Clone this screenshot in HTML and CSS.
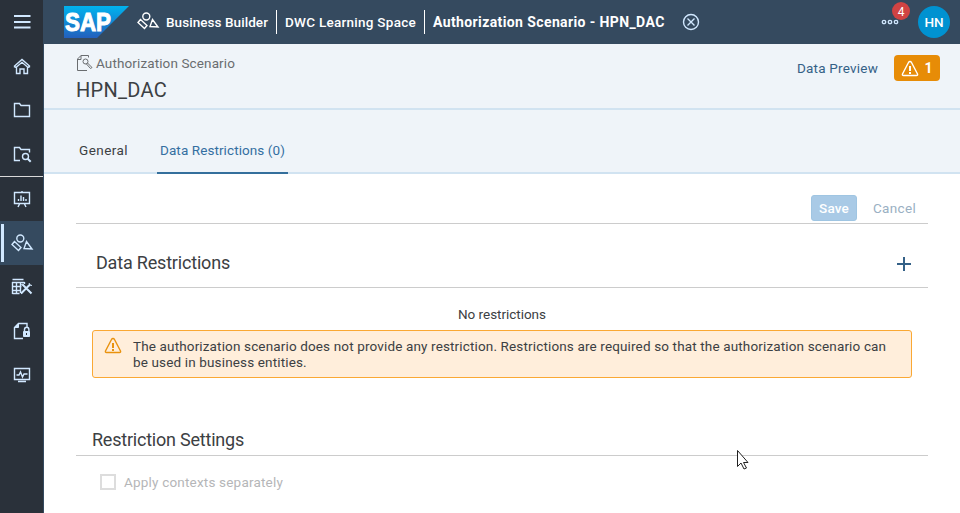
FILE: index.html
```html
<!DOCTYPE html>
<html lang="en">
<head>
<meta charset="utf-8">
<title>Business Builder</title>
<link rel="stylesheet" href="styles.css">
</head>
<body>
<div class="app">
  <nav class="rail">
    <a class="rail-item"><svg width="24" height="24"><path class="thick" d="M4 6h16.500M4 12h16.500M4 17.500h16.500"/></svg></a>
    <a class="rail-item"><svg width="24" height="24"><path class="mid" d="M4 12.500 12 5.500 20 12.500M6.500 13v6.500h3.500v-4.500h4v4.500h3.500V13L12 8.300 6.500 13M4 12.500l2.500 1M20 12.500l-2.500 1"/></svg></a>
    <a class="rail-item"><svg width="24" height="24"><path class="mid" d="M4.500 18.500V5.500h5l1.500 2h8.500v11z"/></svg></a>
    <a class="rail-item"><svg width="24" height="24"><path class="mid" d="M10 18.500H4.500V5.500h5l1.500 2h8.500v3"/><circle class="mid" cx="15.500" cy="14.500" r="3"/><path class="thick" d="m17.700 16.700 3 3"/></svg></a>
    <span class="rail-divider"></span>
    <a class="rail-item"><svg width="24" height="24"><path class="mid" d="M4.500 5.500h15v11h-15zM12 4v2M9.500 17 8 20M14.500 17l1.500 3M8.500 14v-2M11 14V8.500M13.500 14v-4M16 14v-2"/></svg></a>
    <a class="rail-item active"><svg width="24" height="24"><g class="mid"><circle cx="10.300" cy="7.500" r="3.500"/><path d="m4.500 10.500-2.500 3 6.500 6 2.500-3zM16.500 10.500l-2.500 7 8 .500z"/></g></svg></a>
    <a class="rail-item"><svg width="24" height="24"><path class="mid" d="M2.500 4.500h11M2 7.500h12.500M2.500 11.500h9M2.500 15.500h8M2.500 18.500h7M2.500 7v12M6.500 7v12M10.500 7v11M14.500 7v2"/><path class="thick" d="m12.500 9.500 9 9M20 9.500l-9 9"/><path d="m19 8 1 2 2 .500M11 10l2-1M10.500 17l1.500 2"/></svg></a>
    <a class="rail-item"><svg width="24" height="24"><path class="mid" d="M13 19.500H4.500V8.500l4-4h8.500v4M14.500 12v-1.500a2.200 2.200 0 0 1 4.400 0V12"/><path class="solid" d="M4.500 8.500 8.500 4.500v4zM13.500 12.500h6v5h-6z"/><path class="dark" d="M16.500 14v2"/></svg></a>
    <a class="rail-item"><svg width="24" height="24"><path class="mid" d="M4.500 5.500h15v11h-15zM8 18.500h8M6.500 12H9l1.500-3 2 5 1.500-3h3.500"/></svg></a>
  </nav>
  <div class="main">
    <header class="shell">
      <svg class="logo" width="65" height="32" viewBox="0 0 65 32"><defs><linearGradient id="sap" x2="0" y2="1"><stop stop-color="#00b3ee"/><stop offset="1" stop-color="#2360bd"/></linearGradient></defs><path fill="url(#sap)" stroke="none" d="M0 0h65L33 32H0z"/><text x="1" y="25" textLength="46" lengthAdjust="spacingAndGlyphs">SAP</text></svg>
      <div class="crumb crumb-app"><svg width="24" height="24"><g class="mid"><circle cx="10.300" cy="6.500" r="3.500"/><path d="m4.500 9.500-2.500 3 6.500 6 2.500-3zM16.500 9.500l-2.500 7 8 .500z"/></g></svg><span>Business Builder</span></div>
      <div class="crumb crumb-space"><span>DWC Learning Space</span></div>
      <div class="crumb crumb-page"><span>Authorization Scenario - HPN_DAC</span></div>
      <svg class="close" width="18" height="18"><circle class="mid" cx="9" cy="9" r="7.500"/><path class="mid" d="m5.500 5.500 7 7m0-7-7 7"/></svg>
      <div class="more"><svg width="18" height="6"><circle cx="3" cy="3" r="1.700"/><circle cx="9" cy="3" r="1.700"/><circle cx="15" cy="3" r="1.700"/></svg><span class="badge">4</span></div>
      <div class="avatar">HN</div>
    </header>
    <section class="object-header">
      <div class="object-title">
        <div class="object-type"><svg width="18" height="18"><path d="M11 16.500H1.500V5L5 1.500h7.500v2M1.500 5.500h3.500v-4"/><circle cx="9.500" cy="7.500" r="2.500"/><path d="m10 9.500 4.500 5 1.500-1-4.500-4.500"/></svg><span>Authorization Scenario</span></div>
        <h1>HPN_DAC</h1>
      </div>
      <a class="preview">Data Preview</a>
      <div class="warn-button"><svg width="18" height="17"><path class="mid" d="M9 1.500q-1 0-1.500 1L1.500 14q-.500 1.500 1 1.500h13q1.500 0 1-1.500L10.500 2.500q-.500-1-1.500-1z"/><path class="bang" d="M9 6v5M9 12v2"/></svg><b>1</b></div>
    </section>
    <div class="tabs">
      <a class="tab general">General</a>
      <a class="tab selected">Data Restrictions (0)</a>
    </div>
    <main class="content">
      <div class="toolbar"><button class="save">Save</button><a class="cancel">Cancel</a></div>
      <div class="list-header"><h2>Data Restrictions</h2><svg width="16" height="16"><path d="M8 1v14M1 8h14"/></svg></div>
      <p class="empty">No restrictions</p>
      <div class="message"><svg width="18" height="17"><path class="mid" d="M9 1.500q-1 0-1.500 1L1.500 14q-.500 1.500 1 1.500h13q1.500 0 1-1.500L10.500 2.500q-.500-1-1.500-1z"/><path class="bang" d="M9 6v5M9 12v2"/></svg><p>The authorization scenario does not provide any restriction. Restrictions are required so that the authorization scenario can be used in business entities.</p></div>
      <div class="settings-header"><h2>Restriction Settings</h2></div>
      <label class="option"><i class="box"></i><span>Apply contexts separately</span></label>
    </main>
  </div>
</div>
<svg class="pointer" width="14" height="22"><path d="M1.500 1.500v16l3.500-3.500 3 6 2.500-1-3-5.500h4.500z"/></svg>
</body>
</html>
```
FILE: styles.css
```css
* { box-sizing: border-box; }
body { margin: 0; background: #fff; color: #3c4043; font: 13.500px/16px Roboto, "Liberation Sans", sans-serif; overflow: hidden; }
h1, h2, p { margin: 0; font-weight: 400; }
svg { display: block; flex: none; fill: none; stroke: currentColor; }
.thick { stroke-width: 2; }
.mid { stroke-width: 1.400; }
.bang { stroke-width: 2; }
.app { display: flex; height: 513px; }
.rail { width: 44px; flex: none; background: #2a313a; border-right: 1px solid #354a5f; color: #d1e8ff; }
.rail-item { display: flex; height: 44px; align-items: center; justify-content: center; padding-left: 1px; }
.rail-item.active { background: linear-gradient(#d1e8ff, #d1e8ff) 1px 3px / 3px 38px no-repeat #354a5f; }
.rail-divider { display: block; height: 1px; background: #d9d9d9; }
.solid { fill: currentColor; }
.dark { stroke: #2a313a; }
.main { flex: 1; min-width: 0; }
.shell { display: flex; align-items: center; height: 44px; padding: 0 10px 0 20px; background: #354a5f; color: #fff; }
.logo text { fill: #fff; stroke: #fff; stroke-width: 1; font: 700 26px "Liberation Sans", sans-serif; }
.crumb { display: flex; align-items: center; height: 24px; font-weight: 500; white-space: nowrap; }
.crumb-app { padding: 0 8px 0 7px; gap: 6px; letter-spacing: .066px; }
.crumb-space { padding: 0 8px; border-left: 1px solid #fff; letter-spacing: .264px; }
.crumb-page { padding: 0 17px 0 8px; border-left: 1px solid #fff; font-size: 14px; font-weight: 700; letter-spacing: .390px; }
.close, .more { color: #d1e8ff; }
.more { position: relative; margin-left: auto; margin-right: 19px; }
.more svg { stroke-width: 1.300; }
.badge { position: absolute; left: 11px; top: -17px; width: 18px; height: 18px; border-radius: 50%; background: #d04343; color: #fff; font-size: 12px; line-height: 20px; text-align: center; }
.avatar { width: 32px; height: 32px; border-radius: 50%; background: #0092d1; font-weight: 500; line-height: 32px; text-align: center; }
.object-header { display: flex; align-items: flex-start; height: 66px; padding: 10px 20px 0 32px; background: #eff4f9; border-bottom: 2px solid #d1e3f1; }
.object-title { flex: 1; }
.object-type { display: flex; align-items: center; gap: 2px; height: 18px; color: #6a6d70; letter-spacing: .117px; }
h1 { margin-top: 6px; font-size: 20px; line-height: 24px; letter-spacing: .277px; }
.preview { margin: 6px 16px 0 0; color: #346187; letter-spacing: .210px; }
.warn-button { display: flex; align-items: center; justify-content: center; gap: 5px; width: 46px; height: 26px; margin-top: 1px; border-radius: 4px; background: #e78c07; color: #fff; font-size: 14px; }
.tabs { display: flex; gap: 26px; height: 64px; padding: 0 32px; background: #eff4f9; border-bottom: 2px solid #d1e3f1; }
.tab { height: 64px; padding: 32px 3px 0; }
.general { letter-spacing: .442px; }
.tab.selected { color: #346fa1; border-bottom: 2px solid #346f9c; letter-spacing: .086px; }
.content { padding: 0 32px; }
.toolbar { display: flex; justify-content: flex-end; height: 50px; padding: 21px 12px 0 0; border-bottom: 1px solid #ccc; }
.save { width: 46px; height: 26px; padding: 0; border: 1px solid #9fc5e2; border-radius: 3px; background: #a9cae6; color: #fff; font: 500 13.500px/16px Roboto, sans-serif; letter-spacing: .150px; }
.cancel { margin: 5px 0 0 16px; color: #9ab0c3; letter-spacing: .316px; }
.list-header { display: flex; justify-content: space-between; align-items: center; height: 64px; padding: 15px 16px 0 20px; border-bottom: 1px solid #ccc; letter-spacing: -.190px; }
.list-header svg { margin-top: 2px; color: #346187; stroke-width: 2; }
h2 { font-size: 18px; line-height: 24px; }
.empty { padding: 18px 0 8px; text-align: center; letter-spacing: -.029px; }
.message { display: flex; gap: 11px; height: 48px; margin: 0 16px; padding: 7px 11px; border: 1px solid #faa834; border-radius: 3px; background: #ffeedb; }
.message svg { margin-top: -1px; color: #e9920e; }
.message p { max-width: 760px; letter-spacing: .144px; }
.settings-header { margin-top: 50px; height: 28px; padding-left: 16px; border-bottom: 1px solid #ccc; letter-spacing: -.219px; }
.option { display: flex; align-items: center; gap: 8px; padding: 18px 24px; color: #b5b6b8; letter-spacing: .193px; }
.box { width: 16px; height: 16px; border: 2px solid #ddd; }
.pointer { position: absolute; left: 736px; top: 449px; fill: #fff; stroke: #222; }
```
